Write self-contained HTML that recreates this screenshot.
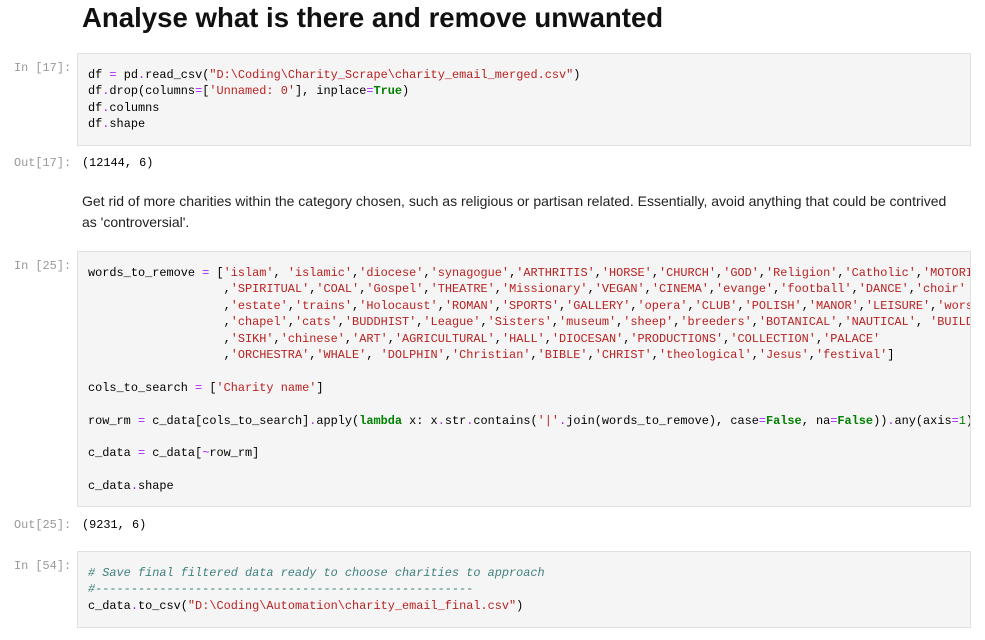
<!DOCTYPE html>
<html><head><meta charset="utf-8"><style>
body{margin:0;width:985px;height:640px;background:#fff;position:relative;overflow:hidden;font-family:"Liberation Sans",sans-serif;}
.abs{position:absolute;}
.pr{position:absolute;font-family:"Liberation Mono",monospace;font-size:11.9px;color:#999;left:14px;}
.box{position:absolute;left:77px;width:892px;background:#f5f5f5;border:1px solid #e0e0e0;overflow:hidden;}
pre{margin:0;font-family:"Liberation Mono",monospace;font-size:11.9px;line-height:16.4px;color:#000;white-space:pre;position:absolute;left:10px;}
.s{color:#BA2121}.k{color:#008000;font-weight:bold}.o{color:#AA22FF}.c{color:#408080;font-style:italic}.n{color:#008000}
</style></head><body>
<div class="abs" style="left:82px;top:0;font-size:27.6px;font-weight:bold;color:#111;line-height:36px;">Analyse what is there and remove unwanted</div>

<div class="pr" style="top:61px">In [17]:</div>
<div class="box" style="top:53px;height:91px;"><pre style="top:13px">df <span class="o">=</span> pd<span class="o">.</span>read_csv(<span class="s">"D:\Coding\Charity_Scrape\charity_email_merged.csv"</span>)
df<span class="o">.</span>drop(columns<span class="o">=</span>[<span class="s">'Unnamed: 0'</span>], inplace<span class="o">=</span><span class="k">True</span>)
df<span class="o">.</span>columns
df<span class="o">.</span>shape</pre></div>

<div class="pr" style="top:156px">Out[17]:</div>
<pre style="left:82px;top:155px">(12144, 6)</pre>

<div class="abs" style="left:82px;top:191px;font-size:14px;line-height:21px;color:#222;width:880px;">Get rid of more charities within the category chosen, such as religious or partisan related. Essentially, avoid anything that could be contrived<br>as 'controversial'.</div>

<div class="pr" style="top:259px">In [25]:</div>
<div class="box" style="top:251px;height:254px;"><pre style="top:13px">words_to_remove <span class="o">=</span> [<span class="s">'islam'</span>, <span class="s">'islamic'</span>,<span class="s">'diocese'</span>,<span class="s">'synagogue'</span>,<span class="s">'ARTHRITIS'</span>,<span class="s">'HORSE'</span>,<span class="s">'CHURCH'</span>,<span class="s">'GOD'</span>,<span class="s">'Religion'</span>,<span class="s">'Catholic'</span>,<span class="s">'MOTORING'</span>
                   ,<span class="s">'SPIRITUAL'</span>,<span class="s">'COAL'</span>,<span class="s">'Gospel'</span>,<span class="s">'THEATRE'</span>,<span class="s">'Missionary'</span>,<span class="s">'VEGAN'</span>,<span class="s">'CINEMA'</span>,<span class="s">'evange'</span>,<span class="s">'football'</span>,<span class="s">'DANCE'</span>,<span class="s">'choir'</span>
                   ,<span class="s">'estate'</span>,<span class="s">'trains'</span>,<span class="s">'Holocaust'</span>,<span class="s">'ROMAN'</span>,<span class="s">'SPORTS'</span>,<span class="s">'GALLERY'</span>,<span class="s">'opera'</span>,<span class="s">'CLUB'</span>,<span class="s">'POLISH'</span>,<span class="s">'MANOR'</span>,<span class="s">'LEISURE'</span>,<span class="s">'worship'</span>
                   ,<span class="s">'chapel'</span>,<span class="s">'cats'</span>,<span class="s">'BUDDHIST'</span>,<span class="s">'League'</span>,<span class="s">'Sisters'</span>,<span class="s">'museum'</span>,<span class="s">'sheep'</span>,<span class="s">'breeders'</span>,<span class="s">'BOTANICAL'</span>,<span class="s">'NAUTICAL'</span>, <span class="s">'BUILDING'</span>
                   ,<span class="s">'SIKH'</span>,<span class="s">'chinese'</span>,<span class="s">'ART'</span>,<span class="s">'AGRICULTURAL'</span>,<span class="s">'HALL'</span>,<span class="s">'DIOCESAN'</span>,<span class="s">'PRODUCTIONS'</span>,<span class="s">'COLLECTION'</span>,<span class="s">'PALACE'</span>
                   ,<span class="s">'ORCHESTRA'</span>,<span class="s">'WHALE'</span>, <span class="s">'DOLPHIN'</span>,<span class="s">'Christian'</span>,<span class="s">'BIBLE'</span>,<span class="s">'CHRIST'</span>,<span class="s">'theological'</span>,<span class="s">'Jesus'</span>,<span class="s">'festival'</span>]

cols_to_search <span class="o">=</span> [<span class="s">'Charity name'</span>]

row_rm <span class="o">=</span> c_data[cols_to_search]<span class="o">.</span>apply(<span class="k">lambda</span> x: x<span class="o">.</span>str<span class="o">.</span>contains(<span class="s">'|'</span><span class="o">.</span>join(words_to_remove), case<span class="o">=</span><span class="k">False</span>, na<span class="o">=</span><span class="k">False</span>))<span class="o">.</span>any(axis<span class="o">=</span><span class="n">1</span>)

c_data <span class="o">=</span> c_data[<span class="o">~</span>row_rm]

c_data<span class="o">.</span>shape</pre></div>

<div class="pr" style="top:518px">Out[25]:</div>
<pre style="left:82px;top:517px">(9231, 6)</pre>

<div class="pr" style="top:559px">In [54]:</div>
<div class="box" style="top:551px;height:75px;"><pre style="top:13px"><span class="c"># Save final filtered data ready to choose charities to approach</span>
<span class="c">#-----------------------------------------------------</span>
c_data<span class="o">.</span>to_csv(<span class="s">"D:\Coding\Automation\charity_email_final.csv"</span>)</pre></div>
</body></html>
